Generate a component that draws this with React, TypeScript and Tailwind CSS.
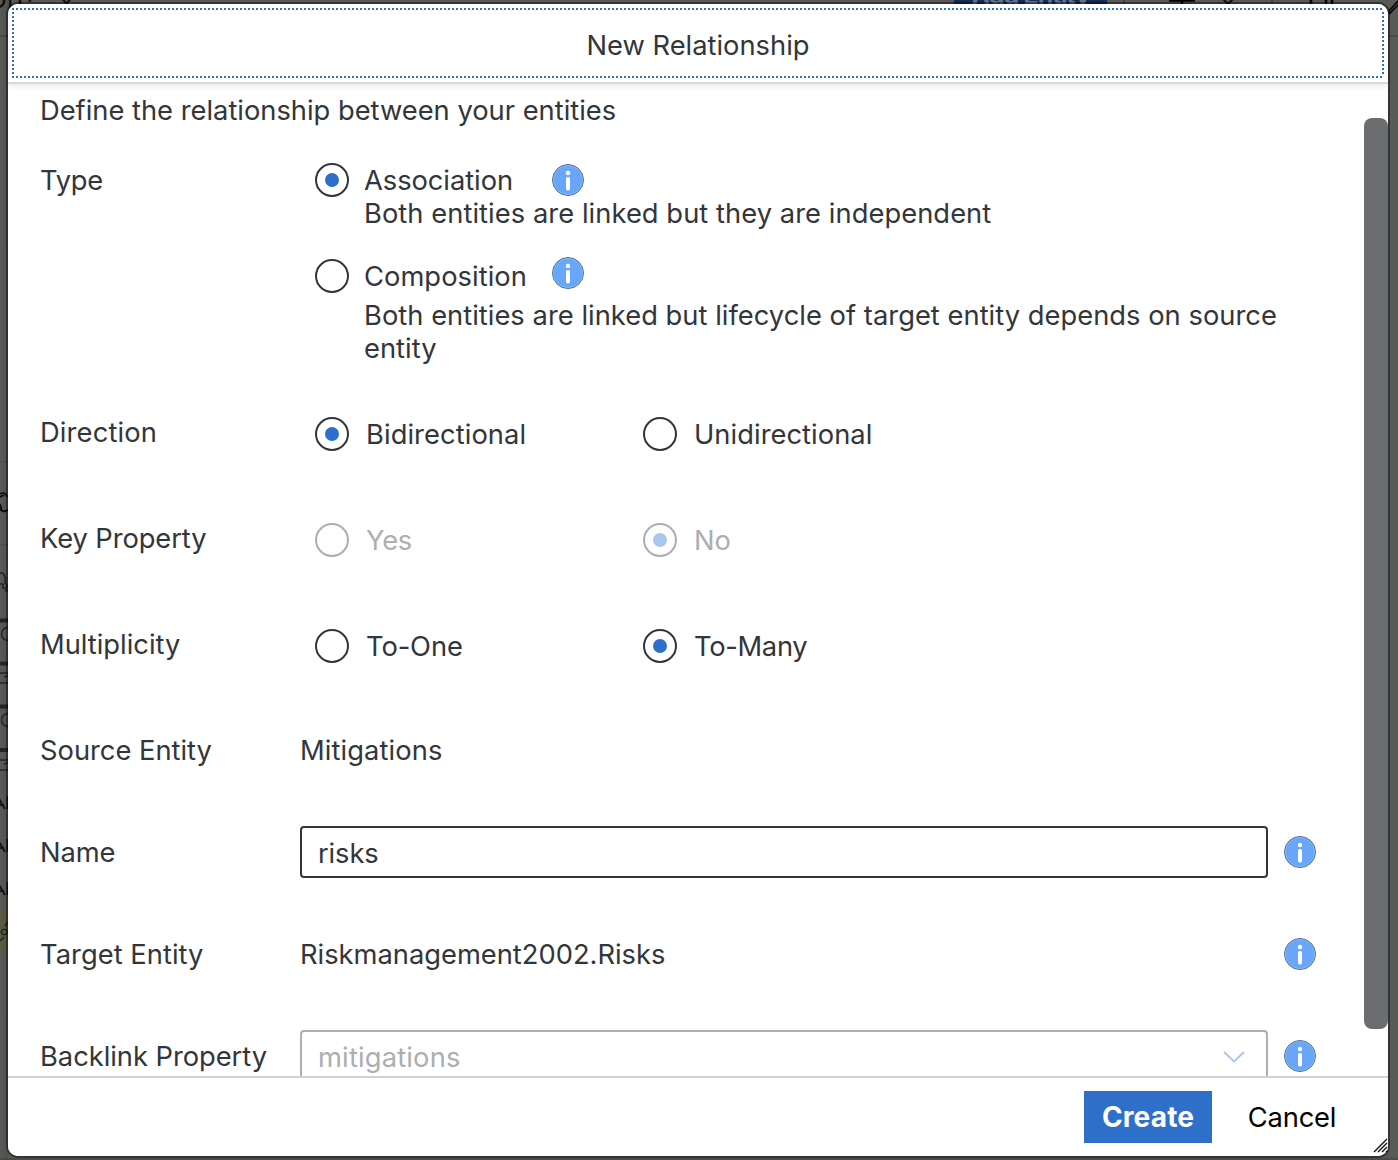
import type { ReactNode } from "react";

function InfoIcon({ className = "" }: { className?: string }) {
  return (
    <svg viewBox="0 0 32 32" className={`h-8 w-8 shrink-0 ${className}`}>
      <circle cx="16" cy="16" r="15.5" fill="#69a6fa" stroke="#4a7196" strokeWidth="1" />
      <circle cx="16" cy="16" r="14.6" fill="none" stroke="#8fbde0" strokeWidth="0.8" />
      <circle cx="16" cy="9" r="2.2" fill="#fff" />
      <rect x="14" y="13" width="4" height="13.4" rx="1.6" fill="#fff" />
    </svg>
  );
}

function Radio({ checked = false, disabled = false }: { checked?: boolean; disabled?: boolean }) {
  return (
    <span
      className={`flex h-[34px] w-[34px] shrink-0 items-center justify-center rounded-full border-2 ${
        disabled ? "border-[#adaeaf]" : "border-[#32363a]"
      }`}
    >
      {checked && <span className={`h-3.5 w-3.5 rounded-full ${disabled ? "bg-[#abc5ed]" : "bg-[#2e6fca]"}`} />}
    </span>
  );
}

function Option({ label, checked, disabled, tracking = "" }: { label: string; checked?: boolean; disabled?: boolean; tracking?: string }) {
  return (
    <label className={`flex w-[328px] items-center gap-[17px] ${disabled ? "text-[#adaeaf]" : ""}`}>
      <Radio checked={checked} disabled={disabled} />
      <span className={tracking}>{label}</span>
    </label>
  );
}

function Row({ label, className = "", tracking = "", children }: { label: string; className?: string; tracking?: string; children: ReactNode }) {
  return (
    <div className={`flex items-start ${className}`}>
      <span className={`w-[260px] shrink-0 whitespace-nowrap ${tracking}`}>{label}</span>
      {children}
    </div>
  );
}

function Backdrop() {
  return (
    <div className="absolute inset-0 overflow-hidden bg-[#585a58]">
      <div className="absolute top-[-18px] left-[-10px] text-[28px] text-[#111]">on?</div>
      <div className="absolute top-[-48px] left-[954px] flex h-[52px] w-[153px] items-end justify-center bg-[#142d57] font-bold text-[#65728a]">
        <span className="-mb-2 text-[25px] leading-[33px] tracking-[-0.9px] whitespace-nowrap">Add Entity</span>
      </div>
      <svg viewBox="0 0 1398 1160" className="absolute inset-0 h-full w-full" fill="none">
        <path d="M0 36H8M1388 36H1398" stroke="#4a4c4a" strokeWidth="2" />
        <path d="M58 -6L66.500 3.500L75 -6M1218 -6L1228 4L1238 -6" stroke="#111" strokeWidth="2" />
        <path d="M1124 0V4M1272 0V4" stroke="#454745" strokeWidth="2" />
        <path d="M1169 0.500H1195M1182 0V4M1311 0V4M1326 0V4M1332 0V4" stroke="#000" strokeWidth="2.500" />
        <path d="M1386 14L1399 0M1389 14L1399 4" stroke="#0a0a0a" strokeWidth="1.800" />
        <path d="M0 462H8M0 545H8" stroke="#484a48" />
        <path d="M0 494C3 492 6 493 7 497M0 497L4 495M0 509C3 513 5 511 8 510M0 504L2 511" stroke="#090909" strokeWidth="1.700" />
        <path d="M0 573C4 572 6 577 5 582L8 588M0 584H3V588H6V591H8" stroke="#242624" strokeWidth="1.700" />
        <path d="M0 620.500H8M0 663.500H8M0 706.500H8M0 750H8" stroke="#242624" strokeWidth="4" />
        <circle cx="8" cy="634" r="6.500" stroke="#242624" strokeWidth="1.500" />
        <circle cx="8" cy="720" r="6.500" stroke="#242624" strokeWidth="1.500" />
        <path d="M0 673H8M4 677L8 676M0 683H8M0 760H8M4 764L8 763M0 770H8" stroke="#242624" strokeWidth="1.700" />
        <path d="M-2 797L5 809M0 805H4M7.500 796V809M-2 840L5 852M0 848H4M7.500 839V852M-2 883L5 895M0 891H4M7.500 882V895" stroke="#161816" strokeWidth="2" />
        <rect y="909" width="8" height="43" fill="#5c5b42" />
        <path d="M1 932C3 928 6 929 8 932M1 932C3 936 6 935 8 932M5 926L8 922M0 941L4 937" stroke="#242416" strokeWidth="1.500" />
      </svg>
      <div className="absolute inset-y-0 left-0 w-2 bg-gradient-to-r from-black/0 to-black/10" />
      <div className="absolute inset-x-0 bottom-0 h-0.5 bg-black/15" />
    </div>
  );
}

export default function App() {
  return (
    <div className="relative h-[1160px] w-[1398px] overflow-hidden pt-1 pl-2 font-['Inter',sans-serif] text-[27.3px] leading-[33px] text-[#32363a]">
      <Backdrop />
      <div className="relative flex h-[1152px] w-[1380px] flex-col overflow-visible rounded-[10px] bg-white shadow-[0_0_0_2px_rgba(0,0,0,0.42)]">
        <header className="relative z-10 h-20 shrink-0 rounded-t-[10px] border-b-2 border-[#d9d9d9] bg-white p-1 shadow-[0_3px_5px_rgba(0,0,0,0.08)]">
          <svg className="pointer-events-none absolute top-0 left-0 h-20 w-[1380px]" fill="none" stroke="#2e6fca" strokeWidth="2" strokeDasharray="2 2">
            <path d="M4 5H1376M4 73H1376M5 8V72M1375 8V72" />
          </svg>
          <h1 className="mt-[21px] text-center">New Relationship</h1>
        </header>

        <main className="relative flex h-[992px] shrink-0 flex-col overflow-hidden pt-[10px] pl-8">
          <p className="whitespace-nowrap">Define the relationship between your entities</p>

          <Row label="Type" className="mt-[37px]" tracking="tracking-[-0.2px]">
            <div className="flex flex-col">
              <div className="flex h-[33px] items-center pl-[15px]">
                <span className="-mt-0.5 flex">
                  <Radio checked />
                </span>
                <span className="ml-[15px] w-[188px] tracking-[-0.05px]">Association</span>
                <InfoIcon className="-mt-0.5" />
              </div>
              <p className="pl-16 tracking-[0.06px]">Both entities are linked but they are independent</p>
              <div className="mt-[29px] flex h-[34px] items-center pl-[15px]">
                <Radio />
                <span className="ml-[15px] w-[188px] tracking-[0.05px]">Composition</span>
                <InfoIcon className="-mt-1.5" />
              </div>
              <p className="mt-1.5 w-[1000px] pl-16 tracking-[0.03px]">
                Both entities are linked but lifecycle of target entity depends on source entity
              </p>
            </div>
          </Row>

          <Row label="Direction" className="mt-[51px]" tracking="tracking-[0.15px]">
            <div className="mt-px flex pl-[15px]">
              <Option label="Bidirectional" checked tracking="tracking-[0.08px]" />
              <Option label="Unidirectional" tracking="tracking-[0.05px]" />
            </div>
          </Row>
          <Row label="Key Property" className="mt-[71px]" tracking="tracking-[-0.08px]">
            <div className="mt-px flex pl-[15px]">
              <Option label="Yes" disabled tracking="tracking-[-0.3px]" />
              <Option label="No" checked disabled />
            </div>
          </Row>
          <Row label="Multiplicity" className="mt-[71px]">
            <div className="mt-px flex pl-[15px]">
              <Option label="To-One" tracking="tracking-[-0.1px]" />
              <Option label="To-Many" checked tracking="tracking-[-0.3px]" />
            </div>
          </Row>
          <Row label="Source Entity" className="mt-[71px]">
            <span className="tracking-[0.1px]">Mitigations</span>
          </Row>
          <Row label="Name" className="mt-[69px]" tracking="tracking-[-0.1px]">
            <div className="-mt-[10px] flex items-center gap-4">
              <input
                className="h-[52px] w-[968px] rounded-[4px] border-2 border-[#32363a] bg-white px-4 pt-0.5 tracking-[-0.1px] outline-none"
                defaultValue="risks"
              />
              <InfoIcon />
            </div>
          </Row>
          <Row label="Target Entity" className="mt-[60px]" tracking="tracking-[0.04px]">
            <span className="w-[984px]">Riskmanagement2002.Risks</span>
            <InfoIcon />
          </Row>
          <Row label="Backlink Property" className="mt-[69px]" tracking="tracking-[-0.03px]">
            <div className="-mt-[10px] flex items-center gap-4">
              <div className="flex h-[52px] w-[968px] items-center justify-between rounded-[4px] border-2 border-[#adaeaf] pt-0.5 pr-[21px] pl-4 text-[#adaeaf]">
                <span className="tracking-[0.18px]">mitigations</span>
                <svg viewBox="0 0 22 12" className="h-3 w-[22px]" fill="none" stroke="#abc5ed" strokeWidth="1.900">
                  <path d="M1 1L11 10.500L21 1" />
                </svg>
              </div>
              <InfoIcon />
            </div>
          </Row>
          <div className="absolute top-[34px] right-0 h-[911px] w-6 rounded-lg bg-[#6c6d71]" />
        </main>

        <footer className="relative flex h-20 shrink-0 items-start justify-end gap-[18px] rounded-b-[10px] border-t-2 border-[#d1d1d1] bg-white pt-[13px] pr-[34px] text-black">
          <button className="h-[52px] w-32 bg-[#2e6fca] text-[28px] font-bold tracking-[0.15px] text-white">Create</button>
          <button className="h-[52px] w-[124px] tracking-[-0.15px]">Cancel</button>
          <svg viewBox="0 0 15 15" className="absolute right-0 bottom-[3px] h-[15px] w-[15px]" stroke="#111" strokeWidth="1.400">
            <path d="M1 14L14 1M5 14L14 5M9 14L14 9M13 14L14 13" />
          </svg>
        </footer>
      </div>
    </div>
  );
}
